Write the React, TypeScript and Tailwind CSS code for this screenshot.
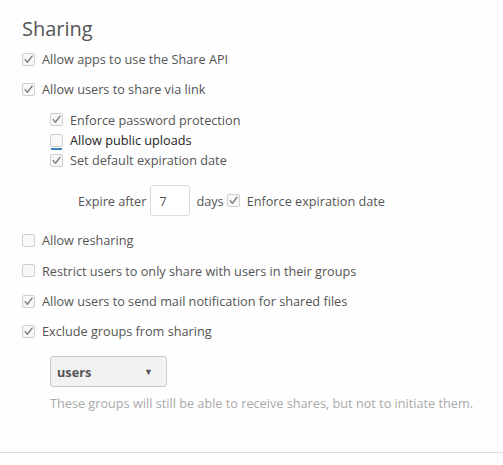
import React from "react";

function Box({ checked, focus }: { checked?: boolean; focus?: boolean }) {
  return (
    <span className="relative inline-flex h-[13px] w-[13px] shrink-0 items-center justify-center rounded-[2px] border border-[#cfcfcf] bg-[#f8f8f8]">
      {checked && (
        <svg width="11" height="11" viewBox="0 0 11 11">
          <path d="M2.2 5.6 L4.4 8.3 L9 2.2" fill="none" stroke="#858585" strokeWidth="1.5" strokeLinecap="round" strokeLinejoin="round" />
        </svg>
      )}
      {focus && <span className="absolute left-0 right-0 bottom-[-4px] h-[2px] bg-[#3b82c4]" />}
    </span>
  );
}

function Row({ label, checked, className = "h-[30px]", dark }: { label: string; checked?: boolean; className?: string; dark?: boolean }) {
  return (
    <div className={`flex items-center gap-[7px] ${className}`}>
      <Box checked={checked} focus={dark} />
      <span className={dark ? "text-[#222]" : "text-[#555]"}>{label}</span>
    </div>
  );
}

export default function App() {
  return (
    <div className="w-[503px] h-[465px] bg-[#fefefe] text-[12.7px] leading-[18px]" style={{ fontFamily: '"Open Sans", sans-serif' }}>
      <div className="pt-[16px] pl-[22px] pb-[40px] border-b border-[#dddddd]">
        <h2 className="text-[20px] leading-[26px] text-[#555] mb-[2px] font-normal">Sharing</h2>
        <Row label="Allow apps to use the Share API" checked />
        <Row label="Allow users to share via link" checked />
        <div className="pl-[28px] mt-[5px]">
          <Row label="Enforce password protection" checked className="h-[21px]" />
          <Row label="Allow public uploads" className="h-[20px]" dark />
          <Row label="Set default expiration date" checked className="h-[20px]" />
          <div className="mt-[15px] pl-[28px] flex items-center h-[31px] text-[#555]">
            <span>Expire after</span>
            <div className="ml-[4px] w-[40px] h-[31px] border border-[#dcdcdc] rounded-[3px] bg-white flex items-center pl-[8px] text-[#555]">7</div>
            <span className="ml-[6px] mr-[3px]">days</span>
            <Box checked />
            <span className="ml-[7px]">Enforce expiration date</span>
          </div>
        </div>
        <div className="mt-[9px]">
          <Row label="Allow resharing" />
          <Row label="Restrict users to only share with users in their groups" className="h-[31px]" />
          <Row label="Allow users to send mail notification for shared files" checked />
          <Row label="Exclude groups from sharing" checked />
        </div>
        <div className="pl-[28px]">
          <div className="mt-[10px] w-[117px] h-[31px] border border-[#c9c9c9] rounded-[3px] bg-[#f2f2f2] flex items-center justify-between pl-[6px] pr-[13px]">
            <span className="font-bold text-[#555]">users</span>
            <span className="text-[9px] text-[#555]">▼</span>
          </div>
          <p className="mt-[7px] text-[#aaa]">These groups will still be able to receive shares, but not to initiate them.</p>
        </div>
      </div>
    </div>
  );
}
